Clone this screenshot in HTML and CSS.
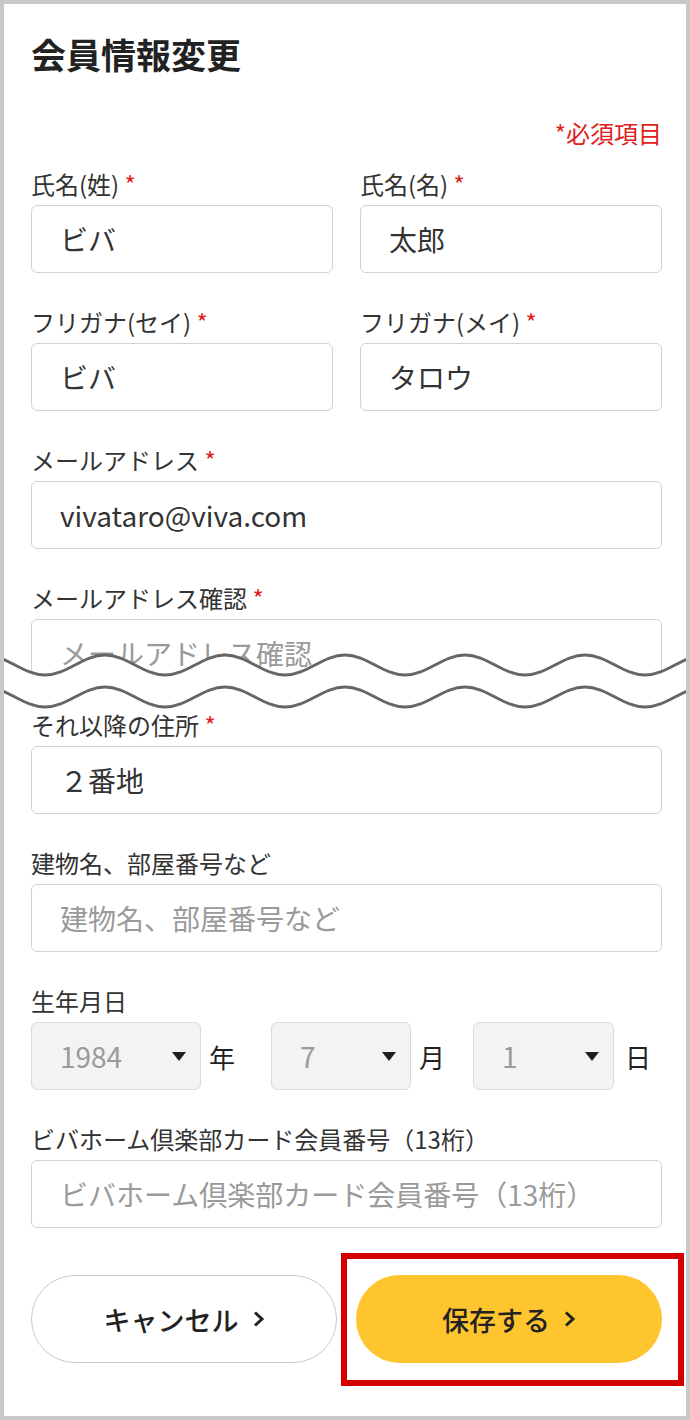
FILE: index.html
```html
<!DOCTYPE html>
<html lang="ja">
<head>
<meta charset="utf-8">
<title>会員情報変更</title>
<link rel="stylesheet" href="styles.css">
</head>
<body>
<div class="page">
  <div class="content">
    <h1 class="title">会員情報変更</h1>
    <p class="req-note">*必須項目</p>

    <div class="row2 first">
      <div class="field">
        <label class="label">氏名(姓) <span class="req">*</span></label>
        <input class="input" type="text" value="ビバ">
      </div>
      <div class="field">
        <label class="label">氏名(名) <span class="req">*</span></label>
        <input class="input" type="text" value="太郎">
      </div>
    </div>

    <div class="row2 gap">
      <div class="field">
        <label class="label">フリガナ(セイ) <span class="req">*</span></label>
        <input class="input" type="text" value="ビバ">
      </div>
      <div class="field">
        <label class="label">フリガナ(メイ) <span class="req">*</span></label>
        <input class="input" type="text" value="タロウ">
      </div>
    </div>

    <div class="field gap">
      <label class="label">メールアドレス <span class="req">*</span></label>
      <input class="input" type="text" value="vivataro@viva.com">
    </div>

    <div class="field gap">
      <label class="label">メールアドレス確認 <span class="req">*</span></label>
      <input class="input" type="text" placeholder="メールアドレス確認">
    </div>

    <div class="break">
      <svg class="wave" width="682" height="70" viewBox="0 0 682 70">
        <path fill="#ffffff" d="M -19 10 C 2.8 10 19.2 30 41 30 S 79.2 10 101 10 S 139.2 30 161 30 S 199.2 10 221 10 S 259.2 30 281 30 S 319.2 10 341 10 S 379.2 30 401 30 S 439.2 10 461 10 S 499.2 30 521 30 S 559.2 10 581 10 S 619.2 30 641 30 S 679.2 10 701 10 L 701 42 C 679.2 42 662.8 62 641 62 S 602.8 42 581 42 S 542.8 62 521 62 S 482.8 42 461 42 S 422.8 62 401 62 S 362.8 42 341 42 S 302.8 62 281 62 S 242.8 42 221 42 S 182.8 62 161 62 S 122.8 42 101 42 S 62.8 62 41 62 S 2.8 42 -19 42 Z"/>
        <path fill="none" stroke="#666666" stroke-width="3" d="M -19 10 C 2.8 10 19.2 30 41 30 S 79.2 10 101 10 S 139.2 30 161 30 S 199.2 10 221 10 S 259.2 30 281 30 S 319.2 10 341 10 S 379.2 30 401 30 S 439.2 10 461 10 S 499.2 30 521 30 S 559.2 10 581 10 S 619.2 30 641 30 S 679.2 10 701 10"/>
        <path fill="none" stroke="#666666" stroke-width="3" d="M -19 42 C 2.8 42 19.2 62 41 62 S 79.2 42 101 42 S 139.2 62 161 62 S 199.2 42 221 42 S 259.2 62 281 62 S 319.2 42 341 42 S 379.2 62 401 62 S 439.2 42 461 42 S 499.2 62 521 62 S 559.2 42 581 42 S 619.2 62 641 62 S 679.2 42 701 42"/>
      </svg>
    </div>

    <div class="field after-break">
      <label class="label">それ以降の住所 <span class="req">*</span></label>
      <input class="input" type="text" value="２番地">
    </div>

    <div class="field gap">
      <label class="label">建物名、部屋番号など</label>
      <input class="input" type="text" placeholder="建物名、部屋番号など">
    </div>

    <div class="field gap">
      <label class="label">生年月日</label>
      <div class="dates">
        <div class="date-group">
          <div class="select sel-y"><span>1984</span><svg class="arrow" width="14" height="9" viewBox="0 0 14 9"><polygon points="0,0 14,0 7,9" fill="#1e1e1e"/></svg></div>
          <span class="unit">年</span>
        </div>
        <div class="date-group">
          <div class="select sel-m"><span>7</span><svg class="arrow" width="14" height="9" viewBox="0 0 14 9"><polygon points="0,0 14,0 7,9" fill="#1e1e1e"/></svg></div>
          <span class="unit">月</span>
        </div>
        <div class="date-group">
          <div class="select sel-d"><span>1</span><svg class="arrow" width="14" height="9" viewBox="0 0 14 9"><polygon points="0,0 14,0 7,9" fill="#1e1e1e"/></svg></div>
          <span class="unit unit-day">日</span>
        </div>
      </div>
    </div>

    <div class="field gap">
      <label class="label">ビバホーム倶楽部カード会員番号（13桁）</label>
      <input class="input" type="text" placeholder="ビバホーム倶楽部カード会員番号（13桁）">
    </div>

    <div class="buttons">
      <div class="btn btn-cancel">
        <span>キャンセル</span>
        <svg class="chev" width="13" height="18" viewBox="0 0 13 18"><polyline points="3,2.5 10,9 3,15.5" fill="none" stroke="#222" stroke-width="3"/></svg>
      </div>
      <div class="btn btn-save">
        <span>保存する</span>
        <svg class="chev" width="13" height="18" viewBox="0 0 13 18"><polyline points="3,2.5 10,9 3,15.5" fill="none" stroke="#222" stroke-width="3"/></svg>
        <div class="highlight"></div>
      </div>
    </div>
  </div>
</div>
</body>
</html>
```

FILE: styles.css
```css
* {
  box-sizing: border-box;
}

html,
body {
  margin: 0;
  padding: 0;
}

body {
  font-family: "Noto Sans CJK JP", "Noto Sans", sans-serif;
  background: #ffffff;
  color: #333333;
}

.page {
  width: 690px;
  height: 1420px;
  border: 4px solid #c8c8c8;
  background: #ffffff;
  overflow: hidden;
}

.content {
  padding: 26px 24px 0 27px;
}

.title {
  margin: 0;
  font-size: 35px;
  line-height: 48px;
  font-weight: 700;
  color: #222222;
}

.req-note {
  margin: 38px 0 0;
  text-align: right;
  font-size: 24px;
  line-height: 34px;
  color: #e0201b;
}

.row2 {
  display: grid;
  grid-template-columns: 1fr 1fr;
  column-gap: 27px;
}

.first {
  margin-top: 17px;
}

.gap {
  margin-top: 32px;
}

.after-break {
  margin-top: 21px;
}

.label {
  display: block;
  font-size: 24px;
  line-height: 34px;
  margin-bottom: 4px;
  color: #333333;
}

.req {
  color: #e0201b;
}

.input {
  display: block;
  width: 100%;
  height: 68px;
  margin: 0;
  border: 1px solid #d2d2d2;
  border-radius: 6px;
  padding: 0 0 0 28px;
  font-family: "Noto Sans CJK JP", "Noto Sans", sans-serif;
  font-size: 28px;
  color: #333333;
  background: #ffffff;
  outline: none;
}

.input::placeholder {
  color: #9a9a9a;
  opacity: 1;
}

.break {
  position: relative;
  height: 0;
}

.wave {
  position: absolute;
  top: -42px;
  left: -27px;
  display: block;
}

.dates {
  display: grid;
  grid-template-columns: 240px 202px 1fr;
}

.date-group {
  display: flex;
  align-items: center;
}

.select {
  height: 68px;
  background: #f3f3f3;
  border: 1px solid #dadada;
  border-radius: 6px;
  display: flex;
  align-items: center;
  justify-content: space-between;
  padding: 0 14px 0 28px;
  font-size: 28px;
  color: #9a9a9a;
}

.sel-y {
  width: 170px;
}

.sel-m {
  width: 140px;
}

.sel-d {
  width: 141px;
}

.arrow {
  display: block;
}

.unit {
  margin-left: 8px;
  font-size: 26px;
  color: #222222;
}

.unit-day {
  margin-left: 11px;
}

.buttons {
  display: grid;
  grid-template-columns: 1fr 1fr;
  column-gap: 19px;
  margin-top: 47px;
}

.btn {
  height: 88px;
  border-radius: 44px;
  display: flex;
  align-items: center;
  justify-content: center;
  gap: 13px;
  font-size: 27px;
  font-weight: 500;
  color: #222222;
}

.btn-cancel {
  border: 1px solid #c9c9c9;
  background: #ffffff;
}

.btn-save {
  position: relative;
  background: #fec52e;
}

.chev {
  display: block;
}

.highlight {
  position: absolute;
  top: -22px;
  left: -15px;
  right: -22px;
  bottom: -23px;
  border: 6px solid #d40000;
}
```
